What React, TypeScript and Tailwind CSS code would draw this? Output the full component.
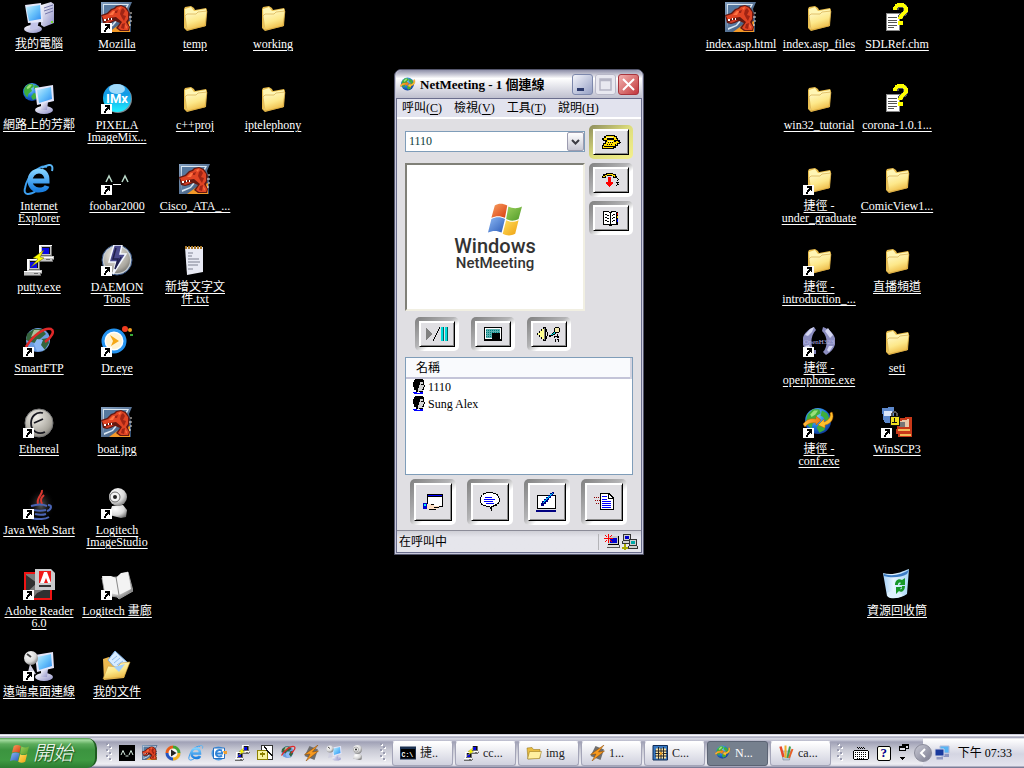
import React, { useState } from 'react'
import clsx from 'clsx'

const serif = "font-['Liberation_Serif','Noto_Sans_CJK_TC',serif]"

// Gradients shared by all the icons below
const Defs = () => (
    <svg className="absolute" width="0" height="0" aria-hidden="true">
        <defs>
            <linearGradient id="folder" x1="0" y1="0" x2="0.4" y2="1">
                <stop offset="0" stopColor="#fffbd0" />
                <stop offset="0.6" stopColor="#fde88a" />
                <stop offset="1" stopColor="#eebd4a" />
            </linearGradient>
            <linearGradient id="screen" x1="0" y1="0" x2="1" y2="1">
                <stop offset="0" stopColor="#c8f0ff" />
                <stop offset="0.5" stopColor="#6cc4fb" />
                <stop offset="1" stopColor="#2f8cf0" />
            </linearGradient>
            <linearGradient id="plastic" x1="0" y1="0" x2="1" y2="1">
                <stop offset="0" stopColor="#ffffff" />
                <stop offset="1" stopColor="#8f90c8" />
            </linearGradient>
            <radialGradient id="globe" cx="0.4" cy="0.3" r="0.8">
                <stop offset="0" stopColor="#8fd4ff" />
                <stop offset="0.5" stopColor="#1f7be0" />
                <stop offset="1" stopColor="#0a2c8c" />
            </radialGradient>
            <linearGradient id="cyan" x1="0" y1="0" x2="0" y2="1">
                <stop offset="0" stopColor="#2ca0e8" />
                <stop offset="0.35" stopColor="#0f9ae6" />
                <stop offset="1" stopColor="#22f0ff" />
            </linearGradient>
            <linearGradient id="ie" x1="0" y1="0" x2="0" y2="1">
                <stop offset="0" stopColor="#7fd0ff" />
                <stop offset="1" stopColor="#1b7fe0" />
            </linearGradient>
            <radialGradient id="disc" cx="0.4" cy="0.3" r="0.8">
                <stop offset="0" stopColor="#f2f0ea" />
                <stop offset="0.7" stopColor="#aaa79f" />
                <stop offset="1" stopColor="#6c6a66" />
            </radialGradient>
            <radialGradient id="white" cx="0.35" cy="0.3" r="0.8">
                <stop offset="0" stopColor="#ffffff" />
                <stop offset="0.6" stopColor="#d8d8d8" />
                <stop offset="1" stopColor="#6a6a6a" />
            </radialGradient>
            <radialGradient id="glow">
                <stop offset="0" stopColor="#5c5c5c" />
                <stop offset="1" stopColor="#000000" stopOpacity="0" />
            </radialGradient>
            <linearGradient id="orange" x1="0" y1="0" x2="1" y2="0">
                <stop offset="0" stopColor="#ffc040" />
                <stop offset="1" stopColor="#ee7410" />
            </linearGradient>
            <linearGradient id="steel" x1="0" y1="0" x2="1" y2="1">
                <stop offset="0" stopColor="#86a2c2" />
                <stop offset="1" stopColor="#2c486c" />
            </linearGradient>
            <linearGradient id="bin" x1="0" y1="0" x2="1" y2="0">
                <stop offset="0" stopColor="#a4d0f8" />
                <stop offset="0.4" stopColor="#e8f6ff" />
                <stop offset="1" stopColor="#a8d8f8" />
            </linearGradient>
            <linearGradient id="flagRed" x1="0" y1="0" x2="1" y2="1">
                <stop offset="0" stopColor="#f8a060" />
                <stop offset="1" stopColor="#d83c10" />
            </linearGradient>
            <linearGradient id="flagGreen" x1="0" y1="0" x2="1" y2="1">
                <stop offset="0" stopColor="#9cd05c" />
                <stop offset="1" stopColor="#4f9a28" />
            </linearGradient>
            <linearGradient id="flagBlue" x1="0" y1="0" x2="1" y2="1">
                <stop offset="0" stopColor="#8cb8f4" />
                <stop offset="1" stopColor="#2c5cb8" />
            </linearGradient>
            <linearGradient id="flagYellow" x1="0" y1="0" x2="1" y2="1">
                <stop offset="0" stopColor="#ffe060" />
                <stop offset="1" stopColor="#eea010" />
            </linearGradient>
        </defs>
    </svg>
)

const Globe = ({ cx, cy, r }: { cx: number, cy: number, r: number }) => (
    <g transform={`translate(${cx} ${cy}) scale(${r / 10})`}>
        <circle r="10" fill="url(#globe)" />
        <path d="M-8-5-4-9 1-9 2-6-1-4 0-1-4 2-5 6-8 3-9-1ZM3-8 7-6 9-1 6 0 4-3 2-4ZM2 1 6 2 5 7 1 9-1 5Z" fill="#3fae3c" />
        <path d="M-6-5-3-8 0-8-2-5-5-3Z" fill="#9be07a" />
    </g>
)

const Flag = () => (
    <g>
        <path d="M6 3C9 1 13 1 17 3L15 14C11 12 7 12 3 14Z" fill="url(#flagRed)" />
        <path d="M18 4C22 6 26 6 30 4L27 15C23 17 20 17 16 15Z" fill="url(#flagGreen)" />
        <path d="M3 15C7 13 11 13 15 15L12 27C8 25 4 25 0 27Z" fill="url(#flagBlue)" />
        <path d="M16 16C20 18 23 18 27 16L24 28C20 30 17 30 13 28Z" fill="url(#flagYellow)" />
    </g>
)

const Tilted = () => (
    <g>
        <ellipse cx="21" cy="27" rx="9" ry="4" fill="url(#plastic)" />
        <path d="M18 20 25 19 24 27 18 27Z" fill="url(#plastic)" />
        <path d="M12 5 30 2 31 18 14 22Z" fill="#e4e6fa" />
        <path d="M14 7 28 4 29 16 16 20Z" fill="url(#screen)" />
    </g>
)

const Pc = () => (
    <g shapeRendering="crispEdges">
        <path d="M3 0H16V11H18V15H16V17H0V12H3Z" fill="#c4c4c4" />
        <path d="M6 2H14V9H6Z" fill="#111" />
        <path d="M6 3H13V9H6Z" fill="#0808e8" />
        <path d="M3 0H16V1H5V11H3ZM0 12H17V13H0Z" fill="#fff" />
        <path d="M15 1H16V11H5V10H15ZM0 16H16V14H18V15H17V17H0ZM10 14H14V15H10Z" fill="#6c6c6c" />
    </g>
)

const icons = {
    computer: <g>
        <path d="M18 3 28 0 31 2 31 21 21 25 18 23Z" fill="url(#plastic)" />
        <path d="M21 6 30 3M21 9 30 6M22 12 30 9" stroke="#7577aa" fill="none" />
        <path d="M28 19h2v2h-2z" fill="#76dc30" />
        <ellipse cx="10" cy="27" rx="9" ry="4" fill="url(#plastic)" />
        <path d="M8 18 16 19 14 27 7 27Z" fill="#c3c5e8" />
        <path d="M2 3 18 1 20 20 5 21Z" fill="#e4e8fa" />
        <path d="M3 5 17 3 18 17 6 19Z" fill="url(#screen)" />
    </g>,
    mozilla: <g>
        <path d="M0 0H31L28 7 30 15 30 30 0 30Z" fill="url(#steel)" />
        <path d="M2 2H28L25 8 22 12 12 24 3 28Z" fill="#dce8f2" />
        <path d="M3 3H26L23 8 18 14 11 23 3 26Z" fill="#56789e" />
        <path d="M8 30 19 22 29 19 29 30Z" fill="#f49a28" />
        <path d="M0 13 6 11 10 7 13 6 15 4 20 3 25 5 27 8 29 12 28 18 27 21 29 25 28 29 19 29 15 26 19 21 14 19 10 21 6 22 2 21Z" fill="#641810" />
        <path d="M1 14 7 12 11 8 14 7 16 5 20 4 24 6 27 10 27 17 25 20 28 25 27 28 20 28 17 26 21 20 15 15 8 16 3 18Z" fill="#e04424" />
        <path d="M4 20 8 18 13 18 9 20 6 21Z" fill="#d43c24" />
        <path d="M3 17h2v2H3zM7 16h1v2H7zM10 16h1v2h-1z" fill="#fff" />
        <path d="M14 9 17 8 16 11 14 11ZM20 8 22 6 24 9 22 13 25 14 23 19 21 16 19 12ZM21 22 24 21 23 27 20 26Z" fill="#a02414" />
        <path d="M8 13 12 9 14 9 12 13ZM17 6 20 5 19 8ZM24 22 26 25 25 27Z" fill="#ff7444" />
        <path d="M29 11h2M28 15h3M29 19h2M28 23h2" stroke="#ece4dc" />
    </g>,
    folder: <g>
        <path d="M5 7 6 5 12 4 15 6 16 8 27 6 28 8 27 24 8 29 5 26Z" fill="#e9bd4c" />
        <path d="M6 7 12 5 15 9 27 7 26 23 7 27Z" fill="#fff6b4" />
        <path d="M6 14 8 12 17 12 19 10 28 9 26 24 8 28Z" fill="url(#folder)" stroke="#cf9f3c" strokeWidth="0.6" />
    </g>,
    network: <g><Globe cx={9} cy={9} r={9} /><Tilted /></g>,
    pixela: <g>
        <circle cx="17" cy="16" r="14" fill="#7d8a92" />
        <circle cx="16" cy="15" r="14" fill="url(#cyan)" />
        <ellipse cx="16" cy="6" rx="8" ry="5" fill="#bfe8ff" opacity="0.8" />
        <text x="16" y="20" textAnchor="middle" fontFamily="Roboto" fontWeight="700" fontSize="13" fill="#fff">IMx</text>
    </g>,
    ie: <g fill="none">
        <path d="M24 3C17 0 4 12 2 24 0 32 7 31 13 27" stroke="#3c9eee" strokeWidth="2" />
        <path d="M8 17H24C24 10 21 7 16 7 11 7 7 11 7 17 7 22 11 26 16 26 20 26 23 25 24 22" stroke="url(#ie)" strokeWidth="5" />
        <path d="M19 4C25 0 31-1 29 7" stroke="#58b4f4" strokeWidth="2" />
    </g>,
    foobar: <g fill="none">
        <path d="M5 18 8 12 11 18M21 18 24 12 27 18" stroke="#b9d8c8" strokeWidth="1.500" />
        <path d="M12 20.500H20" stroke="#fff" />
    </g>,
    putty: <g>
        <g transform="translate(13 0)"><Pc /></g>
        <g transform="translate(1 14)"><Pc /></g>
        <path d="M21 5 10 13 15 14 8 22 21 13 17 12Z" fill="#ff0" stroke="#5c5c00" strokeWidth="0.5" />
    </g>,
    daemon: <g>
        <circle cx="16" cy="15" r="15" fill="#c4ccd2" stroke="#2c4878" />
        <circle cx="16" cy="15" r="13" fill="url(#disc)" />
        <path d="M13 0H21L19 9H25L12 29 15 17H8Z" fill="#4a4a8c" stroke="#f4f8ff" strokeWidth="1.500" />
        <path d="M20 12 14 24 17 14H12L15 3" fill="none" stroke="#20204c" strokeWidth="1.500" />
    </g>,
    notepad: <g>
        <path d="M6 2H24V27L8 30Z" fill="#e8eaf4" />
        <path d="M9 8H14M9 11H13M9 14H20M9 17H21M9 20H19M9 24H14" stroke="#7d8090" />
        <path d="M7 1V4M10 1V4M13 1V4M16 1V4M19 1V4M22 1V4" stroke="#a87828" strokeWidth="2" />
    </g>,
    smartftp: <g>
        <circle cx="15" cy="14" r="12" fill="#6c9ce0" />
        <path d="M4 8 11 3 19 3 23 8 17 13 12 17 8 16 3 14ZM19 13 25 12 26 17 21 25 17 19Z" fill="#35643c" />
        <path d="M11 4 17 4 14 9 8 11Z" fill="#a9c09a" />
        <path d="M14 13 20 14 18 19 22 24 14 25 11 18Z" fill="#8cb8f4" />
        <path d="M3 21C10 9 22 1 28 3 32 5 29 11 22 16" fill="none" stroke="#e02828" strokeWidth="2.500" />
    </g>,
    dreye: <g>
        <circle cx="13" cy="15" r="11" fill="#fff" stroke="#2493f0" strokeWidth="3" />
        <circle cx="13" cy="15" r="8" fill="#ffe8a8" opacity="0.5" />
        <path d="M9 9 18 15 10 20 12 15Z" fill="#f5a818" />
        <circle cx="24" cy="3" r="3" fill="#f03c20" />
        <circle cx="29" cy="4" r="2" fill="#f0a020" />
        <path d="M29 8h3v2h-3z" fill="#38a838" />
    </g>,
    ethereal: <g>
        <circle cx="16" cy="16" r="14" fill="url(#disc)" stroke="#777" />
        <path d="M20 6C13 4 8 10 8 16 8 25 16 28 22 25M11 16 20 12" fill="none" stroke="#181820" strokeWidth="1.800" />
    </g>,
    java: <g fill="none">
        <ellipse cx="18" cy="17" rx="14" ry="17" fill="url(#glow)" />
        <path d="M19 2C20 7 13 9 15 16M21 7C18 10 17 12 19 16" stroke="#d83830" strokeWidth="2" />
        <path d="M8 18C14 16 20 16 24 18M11 22C15 23 19 23 23 22M12 26C16 27 20 27 23 26M8 30C15 32 23 31 26 29M25 17C30 17 28 22 24 23" stroke="#4a64b4" strokeWidth="2" />
    </g>,
    webcam: <g>
        <path d="M11 18 22 17 26 22 25 29 20 30 8 27Z" fill="url(#white)" />
        <circle cx="17" cy="9" r="9" fill="url(#white)" />
        <circle cx="14" cy="9" r="5" fill="#f4f4f4" stroke="#6c6c6c" />
        <circle cx="14" cy="9" r="2" fill="#222" />
    </g>,
    adobe: <g>
        <path d="M2 4H28V30H2Z" fill="#7b7b7b" stroke="#f01414" strokeWidth="2" />
        <path d="M3 6 14 14 3 24ZM14 24 27 18V29H10Z" fill="#303030" />
        <path d="M12 0H28L32 4V21H12Z" fill="#c9cacc" />
        <path d="M16 2H28V14H16Z" fill="#f01818" />
        <path d="M17 14 21 3H24L28 14H25L23 9 21 14Z" fill="#fff" />
        <path d="M16 16H28V18H16Z" fill="#333" />
    </g>,
    book: <g>
        <path d="M1 9 4 26 16 28 18 30 32 22 27 3 20 5 16 8Z" fill="url(#white)" stroke="#999" />
        <path d="M1 7 10 7 15 9 20 4 27 3 30 20 18 26 4 23Z" fill="#f3f3f3" />
        <path d="M15 8 18 26" stroke="#888" />
    </g>,
    remote: <g>
        <Tilted />
        <path d="M7 14 4 26 13 24Z" fill="#cfcfe0" />
        <ellipse cx="8" cy="8" rx="7" ry="7" fill="url(#white)" />
        <path d="M4 4 8 7" fill="none" stroke="#444" strokeWidth="2" />
    </g>,
    documents: <g>
        <path d="M2 9 8 7 11 11 28 12 23 28 3 30Z" fill="#ebb850" />
        <path d="M14 1 27 13 18 22 7 10Z" fill="#d8ecff" stroke="#7cb0e8" />
        <path d="M11 10 16 6M13 13 19 8M16 15 22 11" stroke="#8cbcf0" />
        <path d="M2 29 7 16 16 17 20 13 29 12 23 27Z" fill="url(#folder)" stroke="#cf9f3c" strokeWidth="0.600" />
        <path d="M13 17 24 14 18 22Z" fill="#a4d0fa" />
    </g>,
    chm: <g shapeRendering="crispEdges">
        <path d="M5 11H18V28H5Z" fill="#fff" stroke="#888" />
        <path d="M7 15H16M7 18H16M7 20H16M7 23H16M7 25H13" stroke="#555" />
        <path d="M15 8C15 2 25 2 25 8 25 13 19 12 19 17" fill="none" stroke="#555" strokeWidth="5" />
        <path d="M14 8C14 1 25 1 25 8 25 12 19 12 19 17" fill="none" stroke="#ff0" strokeWidth="4" />
        <path d="M17 19H22V23H17Z" fill="#ff0" />
    </g>,
    openphone: <g>
        <path d="M11 1C-4 7-4 22 9 29L12 25C7 21 7 10 13 4Z" fill="#8b8dc0" />
        <path d="M20 1C36 7 36 22 23 29L20 26C25 21 25 10 19 5Z" fill="#8b8dc0" />
        <path d="M7 3 11 1 9 6 5 10 2 9ZM25 2 30 9 27 12 22 5ZM2 20 6 19 9 25 6 26ZM26 20 30 20 26 26 24 24Z" fill="#d4d6f2" />
        <path d="M11 24h2v4h-2z" fill="#8486bc" />
        <text x="16" y="18" textAnchor="middle" fontFamily="Liberation Serif" fontSize="7" fill="#b4b6e4">OpenH323</text>
    </g>,
    conf: <g>
        <Globe cx={15} cy={14} r={13} />
        <path d="M0 17C4 12 8 11 13 12V9L18 13 13 18V16C8 15 4 17 2 20Z" fill="url(#orange)" stroke="#b85c00" strokeWidth="0.500" />
        <path d="M29 5C32 11 28 17 22 18V21L15 18 21 12V15C26 13 28 10 27 6Z" fill="#ffc02c" stroke="#b85c00" strokeWidth="0.500" />
    </g>,
    winscp: <g shapeRendering="crispEdges">
        <path d="M1 1 13 0V4L12 16H4L2 12Z" fill="#5c88cc" />
        <path d="M3 4H11V9H3Z" fill="#dce8fc" />
        <path d="M16 11 31 10V30H17V27H15V22H16Z" fill="#c83818" />
        <path d="M18 14 28 12V20H18Z" fill="#e8c8a8" />
        <path d="M18 15H24V20H18Z" fill="#777" />
        <path d="M17 22H29V24H17ZM19 27H30V29H19Z" fill="#f4bc58" />
        <path d="M11 9V7C11 4 16 4 16 7V9" fill="none" stroke="#555" strokeWidth="1.500" />
        <path d="M9 9H18V18H9Z" fill="#f0e020" stroke="#111" />
        <path d="M11 15H16M13.500 11V15" stroke="#111" />
    </g>,
    recycle: <g>
        <path d="M2 4C12 7 20 3 28 0L26 25C20 30 9 30 6 27Z" fill="url(#bin)" />
        <path d="M3 5C12 8 21 5 28 1L26 5C20 9 9 9 3 7Z" fill="#3c7cc4" />
        <path d="M6 24C12 20 18 24 22 26 18 30 10 30 7 28Z" fill="#dff2ff" />
        <path d="M14 16C14 11 18 9 21 11L24 9V16H18L20 14C18 13 17 14 17 16ZM24 17C24 22 20 24 18 22L15 25V18H21L19 20C21 21 21 19 21 17Z" fill="#189828" />
    </g>,
    media: <g>
        <circle cx="16" cy="16" r="15" fill="#f4f4f4" stroke="#aaa" />
        <path d="M16 1A15 15 0 0 0 1 16H7A9 9 0 0 1 16 7Z" fill="#e85c18" />
        <path d="M16 1A15 15 0 0 1 31 16H25A9 9 0 0 0 16 7Z" fill="#42a434" />
        <path d="M1 16A15 15 0 0 0 16 31V25A9 9 0 0 1 7 16Z" fill="#2454c0" />
        <path d="M31 16A15 15 0 0 1 16 31V25A9 9 0 0 0 25 16Z" fill="#f0b020" />
        <path d="M12 9 23 16 12 23Z" fill="#222" />
    </g>,
    outlook: <g>
        <circle cx="15" cy="17" r="14" fill="#4c9ce4" />
        <path d="M5 6H27V27H5Z" fill="#fff" stroke="#2870c0" strokeWidth="2" />
        <path d="M22 11C14 8 10 13 10 17 10 23 18 25 22 21M11 17H22V13" fill="none" stroke="#2f84d8" strokeWidth="4" />
        <path d="M24 12H32V18H26Z" fill="#f0a030" />
    </g>,
    magic: <g shapeRendering="crispEdges">
        <path d="M8 1H30V28H8Z" fill="#fff" stroke="#333" strokeWidth="2" />
        <path d="M1 10H20V28H1Z" fill="#f8f4a0" stroke="#8c8000" strokeWidth="2" />
        <path d="M5 18H15M11 14V23" stroke="#8c8000" strokeWidth="3" />
        <path d="M14 3 30 22" stroke="#111" strokeWidth="3" />
    </g>,
    winamp: <g>
        <path d="M13 2 30 9 23 30 3 22Z" fill="#6e6e6e" />
        <path d="M30 0 3 19 14 18 6 32 31 12 19 14Z" fill="#f79a20" stroke="#8c4800" />
    </g>,
    cmd: <g>
        <path d="M0 3H32V29H0Z" fill="#1a3050" />
        <path d="M2 8H30V27H2Z" fill="#000" />
        <text x="3" y="23" fontFamily="Liberation Mono" fontWeight="700" fontSize="13" fill="#fff">C:\</text>
    </g>,
    face: <g>
        <path d="M0 0H32V32H0Z" fill="#000" />
        <path d="M4 20 8 11 12 20M20 20 24 11 28 20M13 22H19" fill="none" stroke="#d8ece0" strokeWidth="2" />
    </g>,
    openfolder: <g>
        <path d="M2 6 12 5 15 9 28 9 28 26 4 28Z" fill="#e8bc40" stroke="#8c6c10" />
        <path d="M7 13 31 13 27 27 3 28Z" fill="#fff0a0" stroke="#8c6c10" />
    </g>,
    grid: <g>
        <path d="M2 1H31V30H2Z" fill="#3878c0" stroke="#102c58" strokeWidth="2" />
        <path d="M8 7H28V27H8Z" fill="#ffe4a0" />
        <path d="M13 4V29M18 6V28M23 4V29M6 12H30M6 17H30M6 22H30" stroke="#282828" strokeWidth="2" />
        <path d="M16 13 22 17 15 21Z" fill="#f0a020" />
    </g>,
    pencils: <g>
        <path d="M7 12H26L23 30H10Z" fill="#bac8dc" stroke="#707888" />
        <path d="M11 24 5 3" stroke="#e84828" strokeWidth="5" />
        <path d="M15 26V1" stroke="#f0b028" strokeWidth="4" />
        <path d="M19 26 24 3" stroke="#3ca050" strokeWidth="4" />
        <path d="M22 26 29 8" stroke="#e86028" strokeWidth="4" />
    </g>,
    lan: <g>
        <path d="M12 2H30V16H12Z" fill="#58b4f4" stroke="#b0b8d8" strokeWidth="2" />
        <path d="M15 18H30V24H15Z" fill="#8c94c0" />
        <path d="M2 8H20V22H2Z" fill="#18389c" stroke="#d0d4e8" strokeWidth="2" />
        <path d="M5 24H18V29H5Z" fill="#9098c0" />
    </g>,
}

type IconName = keyof typeof icons

const Icon = ({ name, className, shortcut }: { name: IconName, className?: string, shortcut?: boolean }) => (
    <svg viewBox="0 0 32 32" className={clsx('shrink-0', className)} aria-hidden="true">
        {icons[name]}
        {shortcut && <g shapeRendering="crispEdges">
            <path d="M0 21H11V31H0Z" fill="#fff" />
            <path d="M4 22H9V27H8V26H7V27H6V28H5V30H3V28H4V26H5V25H6V24H4Z" fill="#000" />
        </g>}
    </svg>
)

type Item = { icon: IconName, label: string, shortcut?: boolean } | null

const leftIcons: Item[][] = [
    [
        { icon: 'computer', label: '我的電腦' },
        { icon: 'network', label: '網路上的芳鄰' },
        { icon: 'ie', label: 'Internet\nExplorer' },
        { icon: 'putty', label: 'putty.exe' },
        { icon: 'smartftp', label: 'SmartFTP', shortcut: true },
        { icon: 'ethereal', label: 'Ethereal', shortcut: true },
        { icon: 'java', label: 'Java Web Start', shortcut: true },
        { icon: 'adobe', label: 'Adobe Reader\n6.0', shortcut: true },
        { icon: 'remote', label: '遠端桌面連線', shortcut: true },
    ],
    [
        { icon: 'mozilla', label: 'Mozilla', shortcut: true },
        { icon: 'pixela', label: 'PIXELA\nImageMix...', shortcut: true },
        { icon: 'foobar', label: 'foobar2000', shortcut: true },
        { icon: 'daemon', label: 'DAEMON\nTools', shortcut: true },
        { icon: 'dreye', label: 'Dr.eye', shortcut: true },
        { icon: 'mozilla', label: 'boat.jpg' },
        { icon: 'webcam', label: 'Logitech\nImageStudio', shortcut: true },
        { icon: 'book', label: 'Logitech 畫廊', shortcut: true },
        { icon: 'documents', label: '我的文件' },
    ],
    [
        { icon: 'folder', label: 'temp' },
        { icon: 'folder', label: 'c++proj' },
        { icon: 'mozilla', label: 'Cisco_ATA_...' },
        { icon: 'notepad', label: '新增文字文\n件.txt' },
    ],
    [
        { icon: 'folder', label: 'working' },
        { icon: 'folder', label: 'iptelephony' },
    ],
]

const rightIcons: Item[][] = [
    [
        { icon: 'mozilla', label: 'index.asp.html' },
    ],
    [
        { icon: 'folder', label: 'index.asp_files' },
        { icon: 'folder', label: 'win32_tutorial' },
        { icon: 'folder', label: '捷徑 -\nunder_graduate', shortcut: true },
        { icon: 'folder', label: '捷徑 -\nintroduction_...', shortcut: true },
        { icon: 'openphone', label: '捷徑 -\nopenphone.exe', shortcut: true },
        { icon: 'conf', label: '捷徑 -\nconf.exe', shortcut: true },
    ],
    [
        { icon: 'chm', label: 'SDLRef.chm' },
        { icon: 'chm', label: 'corona-1.0.1...' },
        { icon: 'folder', label: 'ComicView1...' },
        { icon: 'folder', label: '直播頻道' },
        { icon: 'folder', label: 'seti' },
        { icon: 'winscp', label: 'WinSCP3', shortcut: true },
        null,
        { icon: 'recycle', label: '資源回收筒' },
    ],
]

const IconColumn = ({ items }: { items: Item[] }) => (
    <ul className="w-[78px]">
        {items.map((item, i) => <li key={i} className="h-[81px] pt-[2px]">
            {item && <a href="#" className="flex flex-col items-center gap-1 text-white">
                <Icon name={item.icon} shortcut={item.shortcut} className="size-8" />
                <span className="whitespace-pre text-center text-[12px] leading-[12px] underline underline-offset-2">{item.label}</span>
            </a>}
        </li>)}
    </ul>
)

// Button sunk into a shaded ring
const RingButton = ({
    label, children, square, active
}: {
    label: string, children: React.ReactNode, square?: boolean, active?: boolean
}) => (
    <div className={clsx(
        'rounded-[5px] p-1 bg-linear-to-br',
        square ? 'size-[46px]' : 'w-[44px] h-[34px]',
        active ? 'from-[#8c8c5c] via-[#dede7c] to-[#f4f08c]' : 'from-[#808080] via-[#b4b4b6] via-45% to-white to-60%',
    )}>
        <button aria-label={label} className="flex size-full items-center justify-center border border-t-white border-l-white border-b-black border-r-black bg-[#e0dfe3] shadow-[inset_1px_1px_0_#fff,inset_-1px_-1px_0_#8c8c8c]">
            {children}
        </button>
    </div>
)

const Art = ({ w, h, children }: { w: number, h: number, children: React.ReactNode }) => (
    <svg width={w} height={h} viewBox={`0 0 ${w} ${h}`} shapeRendering="crispEdges" aria-hidden="true">{children}</svg>
)

const phone = <Art w={20} h={16}>
    <path d="M3 2H5V1H14V2H16V4H17V6H19V8H20V9H19V10H17V12H15V14H13V15H1V11H2V9H4V7H2V6H1V4H3Z" fill="#000" />
    <path d="M3 4H5V2H13V3H15V5H16V6H13V4H6V6H3ZM6 6H13V8H15V10H14V12H12V14H2V12H3V10H5V8H6Z" fill="#fd0" />
    <path d="M5 3H12V4H5ZM7 7H12V8H7Z" fill="#fff59a" />
    <path d="M7 8H8V9H7ZM9 8H10V9H9ZM11 8H12V9H11ZM6 10H7V11H6ZM8 10H9V11H8ZM10 10H11V11H10ZM3 12H12V13H3Z" fill="#000" />
    <path d="M15 7H17V8H18V9H16V11H15Z" fill="#fd0" />
</Art>

const hangUp = <Art w={20} h={16}>
    <path d="M1 4H2V2H5V1H12V2H15V4H16V6H12V4H5V6H1Z" fill="#000" />
    <path d="M2 4H4V3H6V2H12V3H14V5H13V4H11V3H6V4H4V5H2Z" fill="#fd0" />
    <path d="M7 5H10V10H12V12H11V13H10V14H9V15H8V14H7V13H6V12H5V10H7Z" fill="#f00" />
    <path d="M16 6H17V7H18V8H17V9H16V8H17V7H16ZM16 10H18V11H17V12H18V13H16V14H15V13H16V11H15V10Z" fill="#000" />
</Art>

const addressBook = <Art w={20} h={16}>
    <path d="M2 1H8V2H10V1H15V2H17V15H11V16H8V15H2Z" fill="#000" />
    <path d="M3 2H8V3H9V14H3ZM10 3H11V2H15V14H10Z" fill="#fff" />
    <path d="M4 4H6V5H4ZM6 5H8V6H6ZM4 7H6V8H4ZM6 8H8V9H6ZM4 10H6V11H4ZM6 11H8V12H6ZM12 4H14V5H12ZM11 5H12V6H11ZM12 7H14V8H12ZM11 8H12V9H11ZM12 10H14V11H12ZM11 11H12V12H11Z" fill="#000" />
    <path d="M16 3H17V5H16Z" fill="#f00" /><path d="M16 6H17V8H16Z" fill="#fd0" /><path d="M16 9H17V12H16Z" fill="#00f" />
</Art>

const playPause = <Art w={24} h={16}>
    <path d="M1 2H2V3H3V4H4V5H5V6H6V7H7V9H6V10H5V11H4V12H3V13H2V14H1Z" fill="#808080" />
    <path d="M14 1H15V3H14V5H13V7H12V9H11V11H10V13H9V15H8V13H9V11H10V9H11V7H12V5H13V3H14Z" fill="#000" />
    <path d="M16 1H18V15H16ZM20 1H22V15H20Z" fill="#0dd" />
    <path d="M18 1H19V15H18ZM22 1H23V15H22Z" fill="#066" />
</Art>

const pip = <Art w={18} h={14}>
    <path d="M0 0H18V14H0Z" fill="#000" /><path d="M1 1H17V12H1Z" fill="#fff" />
    <path d="M2 2H16V11H2Z" fill="#5cb0b0" />
    <path d="M2 3H16M2 5H16M2 7H16M2 9H16" stroke="#008080" strokeDasharray="1 1" />
    <path d="M8 6H16V12H8Z" fill="#000" />
</Art>

const audio = <Art w={26} h={18}>
    <path d="M1 8H3V6H5V4H7V2H10V16H7V14H5V12H3V10H1Z" fill="#000" />
    <path d="M2 8H4V6H6V4H8V14H6V12H4V10H2Z" fill="#ffff90" />
    <path d="M8 3H9V15H8Z" fill="#888" />
    <path d="M10 4H11V7H10ZM11 7H12V11H11ZM10 11H11V14H10Z" fill="#000" />
    <path d="M19 2H23V3H24V7H23V8H20V9H19V10H17V11H15V12H13V10H15V9H16V8H17V7H18V3H19Z" fill="#000" />
    <path d="M19 3H23V7H19Z" fill="#f4ecb0" />
    <path d="M18 7H19V9H17V10H15V9H17V8H18Z" fill="#0cc" />
    <path d="M21 9H22V11H23V13H21V12H19V13H18V11H21ZM19 14H20V17H19ZM21 14H23V17H22V15H21Z" fill="#000" />
</Art>

const share = <Art w={22} h={18}>
    <path d="M5 1H21V14H5Z" fill="#000" /><path d="M6 4H20V13H6Z" fill="#fff" />
    <path d="M6 2H20V3H6Z" fill="#00f" />
    <path d="M1 10H5V16H1Z" fill="#00c" /><path d="M2 11H4V13H2Z" fill="#0ee" />
    <path d="M5 11H9V11H12V13H17V14H16V16H13V17H7V16H5Z" fill="#ffe0c4" />
    <path d="M9 11H12V12H9ZM12 14H17V15H12ZM7 16H14V17H7Z" fill="#000" />
</Art>

const chat = <Art w={22} h={22}>
    <path d="M7 1H14V2H17V3H19V5H20V7H21V11H20V13H18V15H15V16H13V20H12V18H11V16H7V15H4V14H2V12H1V6H2V4H4V2H7Z" fill="#000" />
    <path d="M7 2H14V3H17V4H18V5H19V7H20V11H19V12H18V13H16V14H14V15H12V16H11V15H7V14H4V13H3V12H2V6H3V4H5V3H7Z" fill="#fff" />
    <path d="M6 6H13V7H6ZM5 8H16V9H5ZM5 10H14V11H5ZM7 12H15V13H7Z" fill="#00f" />
</Art>

const whiteboard = <Art w={22} h={22}>
    <path d="M1 4H20V18H1Z" fill="#000" /><path d="M2 5H19V17H2Z" fill="#fff" />
    <path d="M0 19H20V21H0Z" fill="#000080" />
    <path d="M16 1H18V3H17V5H15V7H13V9H12V11H10V13H8V15H5V12H6V10H8V8H10V6H12V4H14V2H16Z" fill="#000080" />
    <path d="M16 2H17V3H16V4H15V5H14V6H13V7H12V8H11V9H10V10H9V11H8V12H7V11H8V9H10V7H12V5H14V3H16Z" fill="#00c4ff" />
</Art>

const transfer = <Art w={22} h={20}>
    <path d="M7 1H16L21 6V18H7Z" fill="#000" /><path d="M8 2H15V7H20V17H8Z" fill="#fff" /><path d="M16 3 19 6H16Z" fill="#fff" />
    <path d="M9 4H14V5H9ZM9 7H14V8H9ZM9 9H18V10H9ZM9 11H18V12H9ZM9 13H18V14H9ZM9 15H18V16H9Z" fill="#00f" />
    <path d="M1 5H2V6H1ZM3 5H4V6H3ZM5 5H6V6H5ZM2 8H3V9H2ZM4 8H5V9H4ZM6 8H7V9H6ZM3 11H4V12H3ZM5 11H6V12H5Z" fill="#900000" />
</Art>

const person = <Art w={14} h={16}>
    <path d="M3 0H11V1H12V3H8V6H7V9H6V13H4V11H2V8H1V3H2V1H3Z" fill="#000" />
    <path d="M8 3H11V6H12V8H11V12H8V13H6V9H7V6H8Z" fill="#d4d4d4" />
    <path d="M9 5H11V6H9ZM11 3H12V6H11ZM12 6H13V8H12ZM11 8H12V10H11ZM10 10H12V11H10ZM7 12H11V13H7Z" fill="#000" />
    <path d="M1 13H5V14H8V13H11V15H2V14H1Z" fill="#00f" />
</Art>

const CaptionButton = ({ label, className, children }: { label: string, className: string, children: React.ReactNode }) => (
    <button aria-label={label} className={clsx('flex size-[21px] items-center justify-center rounded-[3px] border', className)}>{children}</button>
)

const Menu = ({ text, hotkey }: { text: string, hotkey: string }) => (
    <button>{text}(<u className="underline-offset-2">{hotkey}</u>)</button>
)

const NetMeeting = () => {
    const [address, setAddress] = useState('1110')

    return <section className="absolute left-[394px] top-[69px] w-[250px] rounded-t-[7px] border border-[#54566c] bg-[#c6c7da] px-px pb-px text-[12px] leading-4 text-black">
        <header className="flex h-7 items-center rounded-t-[6px] bg-linear-to-b from-[#8e8fa8] via-white via-30% to-[#bfc0cf] pl-1 pr-[3px] pt-px">
            <Icon name="conf" className="mr-1 size-4" />
            <h1 className="grow text-[13px] font-bold">NetMeeting - 1 個連線</h1>
            <div className="flex gap-[2px]">
                <CaptionButton label="Minimize" className="border-[#7d88ac] bg-linear-to-br from-[#f4f5fb] to-[#96a0c4]">
                    <svg viewBox="0 0 19 19" className="size-[19px]"><path d="M4 13H11V16H4Z" fill="#2c3a6c" /></svg>
                </CaptionButton>
                <CaptionButton label="Maximize" className="border-[#b8b8c8] bg-[#e8e8f0]">
                    <svg viewBox="0 0 19 19" className="size-[19px]"><path d="M4 4H15V15H4ZM4 5.500H15" fill="none" stroke="#b4b4c4" strokeWidth="1.500" /></svg>
                </CaptionButton>
                <CaptionButton label="Close" className="border-[#a8343c] bg-linear-to-br from-[#f0b0b0] to-[#c0323c]">
                    <svg viewBox="0 0 19 19" className="size-[19px]"><path d="M4 4 15 15M15 4 4 15" stroke="#fff" strokeWidth="2" /></svg>
                </CaptionButton>
            </div>
        </header>

        <div className="border border-[#6a6d8c] bg-[#e0dfe3]">
            <nav className="flex h-5 items-center gap-3 border-b-2 border-white bg-[#e2e3ee] pl-[5px]">
                <Menu text="呼叫" hotkey="C" />
                <Menu text="檢視" hotkey="V" />
                <Menu text="工具" hotkey="T" />
                <Menu text="說明" hotkey="H" />
            </nav>

            <div className="px-2 pb-[5px] pt-[6px]">
                <div className="flex gap-1">
                    <div className="flex grow flex-col gap-[11px] pt-[6px]">
                        <div className="grid h-[21px] border border-[#7f9db9] bg-white">
                            <select
                                aria-label="Address"
                                className="col-start-1 row-start-1 appearance-none pb-[2px] pl-[3px] text-[12px] text-[#0c3c3c]"
                                value={address}
                                onChange={e => setAddress(e.target.value)}
                            >
                                <option>1110</option>
                            </select>
                            <div className="pointer-events-none col-start-1 row-start-1 flex w-[17px] items-center justify-center justify-self-end rounded-[2px] border border-[#9c9cb0] bg-linear-to-b from-white to-[#c8c8d4]">
                                <svg width="9" height="6" viewBox="0 0 9 6"><path d="M1 1 4.500 4.500 8 1" fill="none" stroke="#3c3c44" strokeWidth="2" /></svg>
                            </div>
                        </div>
                        <div className="flex h-[148px] flex-col items-center border-2 border-b-[#f1efe2] border-l-[#808078] border-r-[#f1efe2] border-t-[#808078] bg-white pt-[37px] font-['Roboto',sans-serif] font-medium text-[#333]">
                            <svg viewBox="0 0 30 30" className="ml-5 h-[34px] w-[38px]" aria-hidden="true"><Flag /></svg>
                            <p className="text-[20px] leading-5">Windows</p>
                            <p className="text-[15px] leading-[14px]">NetMeeting</p>
                        </div>
                    </div>
                    <div className="flex flex-col gap-1">
                        <RingButton label="Place call" active>{phone}</RingButton>
                        <RingButton label="End call">{hangUp}</RingButton>
                        <RingButton label="Directory">{addressBook}</RingButton>
                    </div>
                </div>

                <div className="mt-[6px] flex gap-3 pl-[10px]">
                    <RingButton label="Start video">{playPause}</RingButton>
                    <RingButton label="Picture in picture">{pip}</RingButton>
                    <RingButton label="Adjust audio">{audio}</RingButton>
                </div>

                <div className="mt-[6px] h-[118px] border border-[#7f9db9] bg-white">
                    <table className="w-full text-left">
                        <thead>
                            <tr className="h-5 border-b-2 border-[#c4c4d8] bg-[#f9fafd]">
                                <th className="border-r-2 border-[#d4d4e0] pl-[10px] font-normal">名稱</th>
                            </tr>
                        </thead>
                        <tbody>
                            {['1110', 'Sung Alex'].map(name => <tr key={name} className="h-[17px]">
                                <td><div className="flex items-center gap-[2px] pl-[6px]">{person}{name}</div></td>
                            </tr>)}
                        </tbody>
                    </table>
                </div>

                <div className="mt-1 flex gap-[11px] pl-[5px]">
                    <RingButton label="Share program" square>{share}</RingButton>
                    <RingButton label="Chat" square>{chat}</RingButton>
                    <RingButton label="Whiteboard" square>{whiteboard}</RingButton>
                    <RingButton label="Transfer files" square>{transfer}</RingButton>
                </div>
            </div>

            <footer className="flex h-[22px] items-center border-t border-[#8c8c98] bg-linear-to-b from-[#cfcfd6] to-[#e6e6ec] to-30% pl-[2px] pr-[3px]">
                <span className="grow">在呼叫中</span>
                <div className="flex gap-[2px] border-l border-[#b4b4b8] pl-[5px]">
                    <Art w={16} h={16}>
                        <path d="M4 2H15V11H4Z" fill="#000" /><path d="M4 2H14V10H4Z" fill="#c8c8c8" /><path d="M6 4H13V9H6Z" fill="#00c" />
                        <path d="M3 11H16V14H3Z" fill="#555" /><path d="M3 11H15V13H3Z" fill="#e0e0e0" />
                        <path d="M4 0H5V4H9V5H5V9H4V5H0V4H4ZM1 1H2V2H1ZM2 2H3V3H2ZM6 2H7V3H6ZM7 1H8V2H7ZM2 6H3V7H2ZM1 7H2V8H1ZM6 6H7V7H6ZM7 7H8V8H7Z" fill="#f00" />
                    </Art>
                    <Art w={16} h={16}>
                        <path d="M1 0H9V7H10V10H0V7H1Z" fill="#333" /><path d="M2 1H8V6H2ZM1 7H9V9H1Z" fill="#d0d0d0" /><path d="M3 2H7V5H3Z" fill="#00c" />
                        <path d="M7 5H15V12H16V15H6V12H7Z" fill="#333" /><path d="M8 6H14V11H8ZM7 12H15V14H7Z" fill="#d0d0d0" /><path d="M9 7H13V10H9Z" fill="#0aa" />
                        <path d="M2 10H4V13H6V15H4V16H2V15H0V13H2Z" fill="#aa0" />
                    </Art>
                </div>
            </footer>
        </div>
    </section>
}

const Grip = () => (
    <svg width="8" height="20" viewBox="0 0 8 20" className="shrink-0" shapeRendering="crispEdges" aria-hidden="true">
        <path d="M1 1h2v2H1zM4 4h2v2H4zM1 7h2v2H1zM4 10h2v2H4zM1 13h2v2H1zM4 16h2v2H4z" fill="#fff" />
        <path d="M0 0h2v2H0zM3 3h2v2H3zM0 6h2v2H0zM3 9h2v2H3zM0 12h2v2H0zM3 15h2v2H3z" fill="#9a9cb0" />
    </svg>
)

const quickLaunch: IconName[] = ['face', 'mozilla', 'media', 'ie', 'outlook', 'putty', 'magic', 'smartftp', 'winamp', 'remote', 'webcam']

const tasks: { icon: IconName, label: string }[] = [
    { icon: 'cmd', label: '捷..' },
    { icon: 'putty', label: 'cc...' },
    { icon: 'openfolder', label: 'img' },
    { icon: 'winamp', label: '1...' },
    { icon: 'grid', label: 'C...' },
    { icon: 'conf', label: 'N...' },
    { icon: 'pencils', label: 'ca...' },
]

const Taskbar = () => {
    const [current, setCurrent] = useState('conf')

    return <footer className="flex h-[34px] items-stretch bg-[linear-gradient(#a3a3bc_0px,#ffffff_1px,#f4f4fa_2px,#8b8ca6_3px,#d8d9e6_4px,#c9cad8_6px,#a0a1b6_8px,#c8c9d4_16px,#eeeef3_30px,#d0d0dc_32px,#7c7d98_33px)] text-[12px] leading-4">
        <button className="mt-1 flex w-[97px] items-center gap-1 rounded-r-[10px] border-r-2 border-[#1e5c20] bg-[linear-gradient(#4c9c4c_0px,#a4dca0_2px,#5cac5c_6px,#3c9440_12px,#3f9a42_22px,#2c7c30_30px)] pl-[10px] text-white">
            <svg viewBox="0 0 30 30" className="size-[19px]" aria-hidden="true"><Flag /></svg>
            <span className="text-[20px] font-light italic leading-6 [text-shadow:1px_1px_1px_#1c4c1c]">開始</span>
        </button>
        <div className="flex grow items-center pt-1">
            <div className="flex items-center pl-[9px]">
                <Grip />
                <div className="flex gap-[7px] pl-[5px]">
                    {quickLaunch.map(name => <button key={name} aria-label={name}><Icon name={name} className="size-4" /></button>)}
                </div>
            </div>
            <div className="flex grow items-center pl-[15px]">
                <Grip />
                <div className="flex grow gap-[2px] pl-1">
                    {tasks.map(({ icon, label }) => <button
                        key={icon}
                        onClick={() => setCurrent(icon)}
                        className={clsx(
                            'flex h-[25px] w-[61px] items-center gap-1 rounded-[3px] border pl-[7px]',
                            current === icon
                                ? 'border-[#5c6474] bg-[#76808e] text-white'
                                : 'border-[#a4a5b8] border-t-white bg-linear-to-b from-white to-[#d0d1de] text-[#222]',
                        )}
                    >
                        <Icon name={icon} className="size-4" />
                        <span>{label}</span>
                    </button>)}
                </div>
            </div>
            <div className="flex items-center gap-2 pr-3">
                <Grip />
                <Art w={16} h={16}>
                    <path d="M4 2H5V3H4ZM5 3H6V4H5ZM6 2H7V3H6ZM7 3H8V4H7ZM8 2H9V3H8ZM9 3H10V4H9ZM10 2H11V3H10ZM11 3H12V4H11Z" fill="#000" />
                    <path d="M1 5H15V6H16V14H15V15H1V14H0V6H1Z" fill="#000" />
                    <path d="M1 6H15V14H1Z" fill="#fff" />
                    <path d="M2 7.500H14M2 9.500H14M2 11.500H14M4 13.500H12" stroke="#000" strokeDasharray="1 1" />
                </Art>
                <button aria-label="Help" className="h-[15px] w-[14px] rounded-[2px] border border-black bg-[#fffff0] text-[13px] font-bold leading-3 text-[#00008c]">?</button>
                <Art w={12} h={18}>
                    <path d="M3 0H10V5H3Z" fill="#000" /><path d="M4 2H9V4H4Z" fill="#dddde4" />
                    <path d="M0 2H7V7H0Z" fill="#000" /><path d="M1 4H6V6H1Z" fill="#dddde4" />
                    <path d="M1 13H6V14H5V15H4V16H3V15H2V14H1Z" fill="#000" />
                </Art>
            </div>
        </div>
        <div className="flex shrink-0 items-center bg-[linear-gradient(#a3a3bc_0px,#ffffff_1px,#f4f4fa_2px,#8b8ca6_3px,#ffffff_5px,#d4d5e2_20px,#e4e4ee_32px,#7c7d98_33px)] pr-3 pt-1">
            <button aria-label="Show hidden icons" className="-ml-[9px] flex size-[18px] items-center justify-center rounded-full border border-[#8c8d9c] bg-linear-to-br from-[#c8c9d4] to-[#7c7d90]">
                <svg width="8" height="10" viewBox="0 0 8 10"><path d="M6 1 2 5 6 9" fill="none" stroke="#fff" strokeWidth="2" /></svg>
            </button>
            <Icon name="lan" className="ml-[2px] size-4" />
            <time className="whitespace-nowrap pl-2">下午 07:33</time>
        </div>
    </footer>
}

const App = () => {
    return <div className={clsx('relative flex min-h-screen flex-col bg-black', serif)}>
        <Defs />
        <main className="flex grow justify-between pr-[88px]">
            <div className="flex">
                {leftIcons.map((items, i) => <IconColumn key={i} items={items} />)}
            </div>
            <div className="flex">
                {rightIcons.map((items, i) => <IconColumn key={i} items={items} />)}
            </div>
        </main>
        <NetMeeting />
        <Taskbar />
    </div>
}

export default App
